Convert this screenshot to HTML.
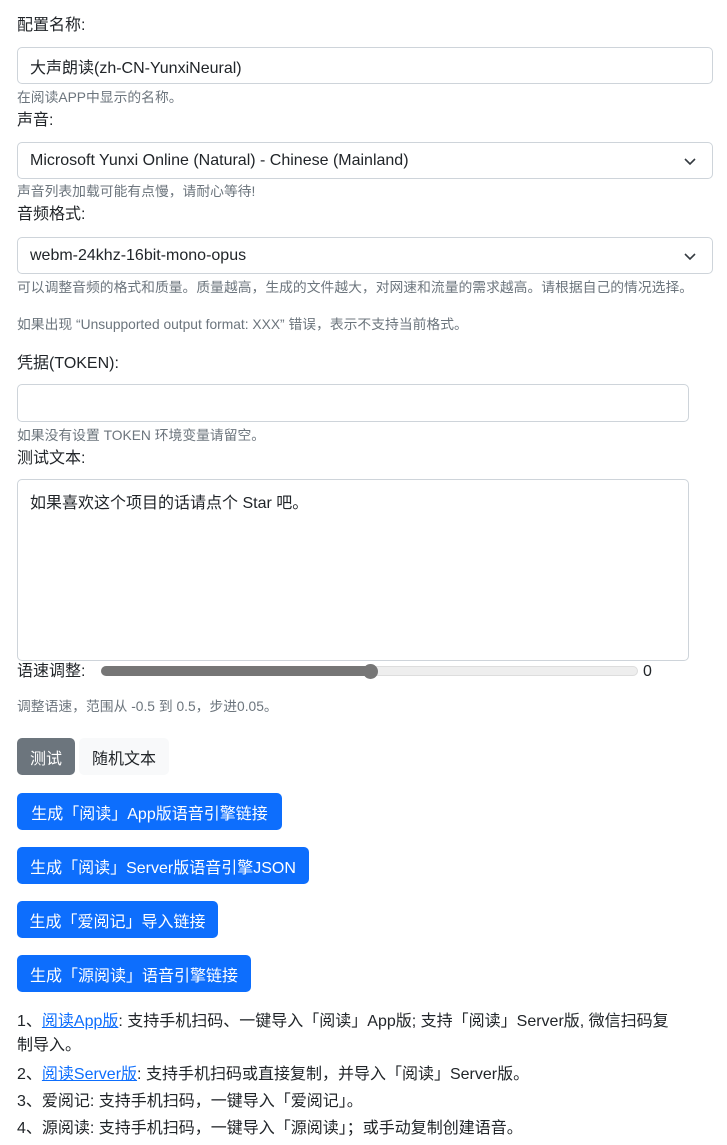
<!DOCTYPE html>
<html><head><meta charset="utf-8"><style>
*{box-sizing:border-box;margin:0;padding:0}
body{width:727px;height:1145px;background:#fff;font-family:"Liberation Sans","Noto Sans CJK SC",sans-serif;color:#212529;font-size:16px;position:relative;overflow:hidden}
.a{position:absolute;white-space:nowrap}
.lbl{left:17px;font-size:16px;line-height:20px}
.help{left:17px;font-size:13.8px;color:#6c757d;line-height:16px}
.box{position:absolute;left:17px;border:1px solid #ced4da;border-radius:5px;background:#fff;padding-left:12px;display:flex;align-items:center;font-size:16px}
.chev{position:absolute;right:16px;top:13px}
.btn{position:absolute;left:17px;height:37px;border-radius:5px;background:#0d6efd;color:#fff;font-size:16px;padding:0 13px;display:flex;align-items:center;white-space:nowrap;justify-content:center}
a{color:#0d6efd;text-decoration:underline}
</style></head><body>
<div class="a lbl" style="top:16px">配置名称:</div>
<div class="box" style="top:47px;width:696px;height:37px">大声朗读(zh-CN-YunxiNeural)</div>
<div class="help a" style="top:90px">在阅读APP中显示的名称。</div>
<div class="a lbl" style="top:111px">声音:</div>
<div class="box" style="top:142px;width:696px;height:37px">Microsoft Yunxi Online (Natural) - Chinese (Mainland)<svg class="chev" width="12" height="10" viewBox="0 0 12 10"><path d="M1 3l5 5 5-5" fill="none" stroke="#343a40" stroke-width="1.6"/></svg></div>
<div class="help a" style="top:184px">声音列表加载可能有点慢，请耐心等待!</div>
<div class="a lbl" style="top:205px">音频格式:</div>
<div class="box" style="top:237px;width:696px;height:37px">webm-24khz-16bit-mono-opus<svg class="chev" width="12" height="10" viewBox="0 0 12 10"><path d="M1 3l5 5 5-5" fill="none" stroke="#343a40" stroke-width="1.6"/></svg></div>
<div class="help a" style="top:280px">可以调整音频的格式和质量。质量越高，生成的文件越大，对网速和流量的需求越高。请根据自己的情况选择。</div>
<div class="help a" style="top:317px">如果出现 “Unsupported output format: XXX” 错误，表示不支持当前格式。</div>
<div class="a lbl" style="top:354px">凭据(TOKEN):</div>
<div class="box" style="top:384px;width:672px;height:38px"></div>
<div class="help a" style="top:428px">如果没有设置 TOKEN 环境变量请留空。</div>
<div class="a lbl" style="top:449px">测试文本:</div>
<div class="box" style="top:479px;width:672px;height:182px;align-items:flex-start;padding-top:9px">如果喜欢这个项目的话请点个 Star 吧。</div>
<div class="a lbl" style="top:662px">语速调整:</div>
<div class="a" style="left:101px;top:666px;width:537px;height:10px;border-radius:5px;background:#eee;border:1px solid #ddd"></div>
<div class="a" style="left:101px;top:666px;width:270px;height:10px;border-radius:5px;background:#767676"></div>
<div class="a" style="left:363px;top:664px;width:15px;height:15px;border-radius:50%;background:#767676"></div>
<div class="a" style="left:643px;top:663px;font-size:16px">0</div>
<div class="help a" style="top:699px">调整语速，范围从 -0.5 到 0.5，步进0.05。</div>
<div class="btn" style="top:738px;background:#6c757d;padding:0;width:58px">测试</div>
<div class="btn" style="top:738px;left:79px;background:#f8f9fa;color:#212529;width:90px;padding:0">随机文本</div>
<div class="btn" style="top:793px;width:265px;padding:0">生成「阅读」App版语音引擎链接</div>
<div class="btn" style="top:847px;width:292px;padding:0">生成「阅读」Server版语音引擎JSON</div>
<div class="btn" style="top:901px;width:201px;padding:0">生成「爱阅记」导入链接</div>
<div class="btn" style="top:955px;width:234px;padding:0">生成「源阅读」语音引擎链接</div>
<div class="a" style="left:17px;top:1010px;line-height:24px;white-space:normal;width:660px">1、<a>阅读App版</a>: 支持手机扫码、一键导入「阅读」App版; 支持「阅读」Server版, 微信扫码复制导入。</div>
<div class="a" style="left:17px;top:1060px">2、<a>阅读Server版</a>: 支持手机扫码或直接复制，并导入「阅读」Server版。</div>
<div class="a" style="left:17px;top:1087px">3、爱阅记: 支持手机扫码，一键导入「爱阅记」。</div>
<div class="a" style="left:17px;top:1114px">4、源阅读: 支持手机扫码，一键导入「源阅读」；或手动复制创建语音。</div>
</body></html>
